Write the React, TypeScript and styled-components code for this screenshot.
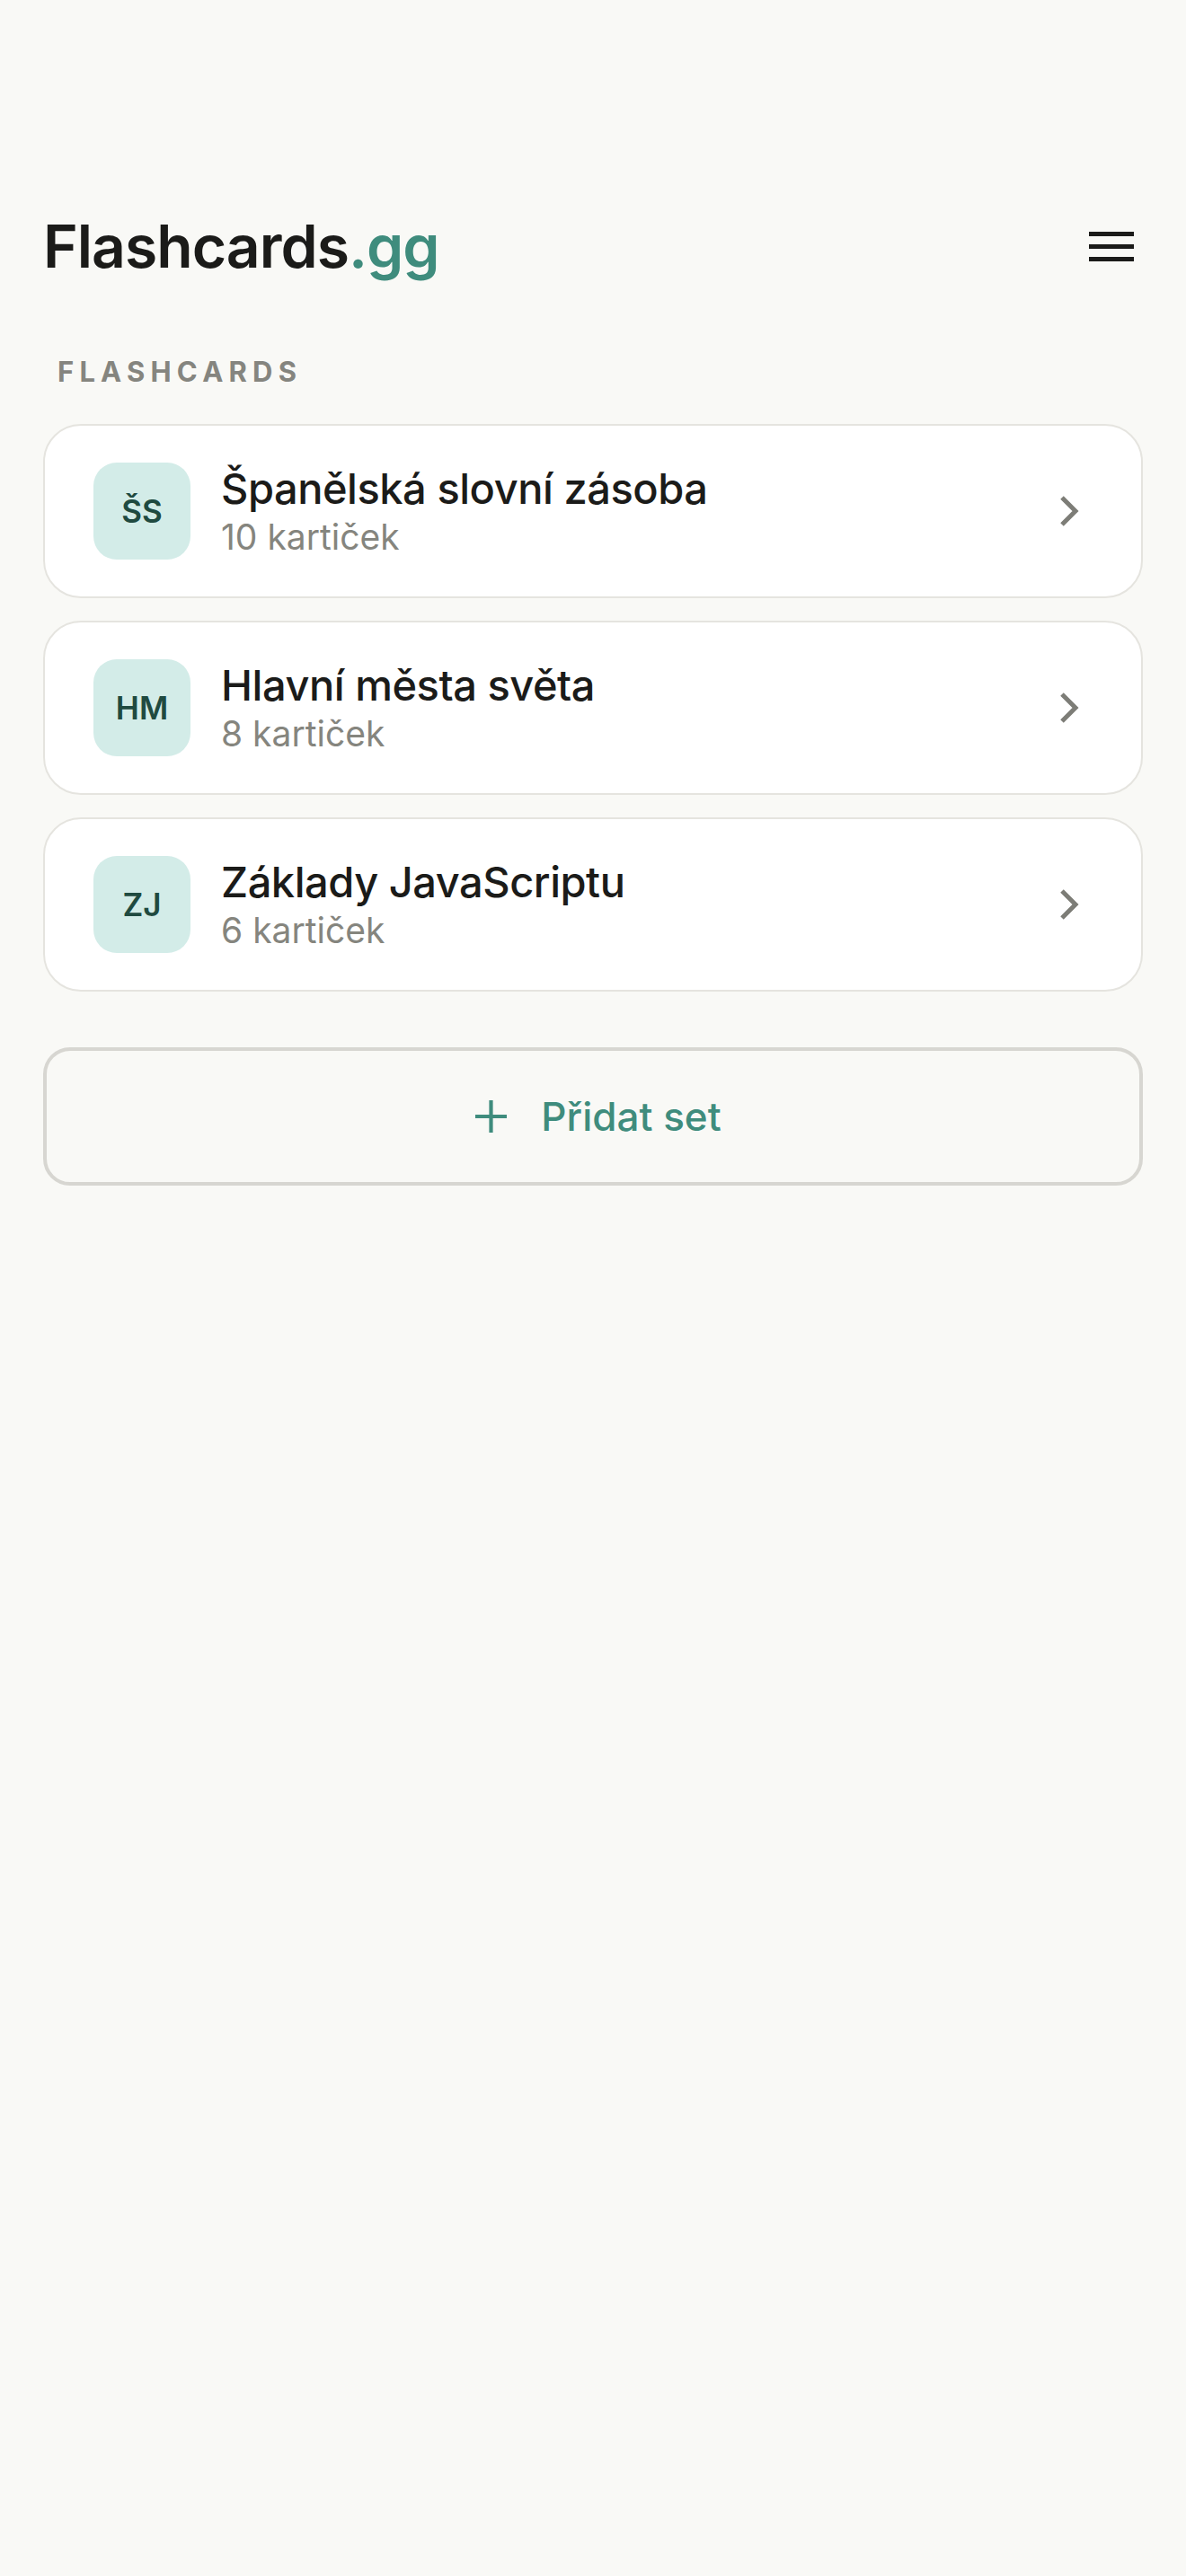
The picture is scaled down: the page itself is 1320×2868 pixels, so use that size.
import React from 'react'
import styled, { createGlobalStyle } from 'styled-components'

const GlobalStyle = createGlobalStyle`
  html, body {
    margin: 0;
    padding: 0;
    background: #f9f9f6;
  }
  body {
    font-family: Inter, "Noto Sans", "DejaVu Sans", sans-serif;
    color: #1b1b19;
    -webkit-font-smoothing: antialiased;
  }
  * { box-sizing: border-box; }
`

const Page = styled.main`
  min-height: 2868px;
  padding: 224px 48px 0;
  background: #f9f9f6;
`

const Header = styled.header`
  height: 100px;
  display: flex;
  align-items: center;
  justify-content: space-between;
`

const Logo = styled.h1`
  margin: 0;
  font-size: 66px;
  font-weight: 600;
  letter-spacing: -0.015em;
  line-height: 1;
  color: #1b1b19;

  span {
    color: #3f8c7d;
  }
`

const MenuButton = styled.button`
  border: 0;
  background: transparent;
  padding: 0;
  margin-right: 10px;
  width: 50px;
  height: 40px;
  display: flex;
  align-items: center;
  justify-content: center;
  cursor: pointer;
`

const SectionLabel = styled.h2`
  margin: 74px 0 0 16px;
  font-size: 31px;
  line-height: 1;
  font-weight: 700;
  letter-spacing: 0.2em;
  color: #85857f;
`

const SetList = styled.ul`
  list-style: none;
  margin: 43px 0 0;
  padding: 0;
  display: flex;
  flex-direction: column;
  gap: 25px;
`

const SetCard = styled.li`
  display: flex;
  align-items: center;
  padding: 41px 54px;
  background: #ffffff;
  border: 2px solid #e5e4df;
  border-radius: 42px;
  cursor: pointer;
`

const Avatar = styled.div`
  width: 108px;
  height: 108px;
  flex-shrink: 0;
  border-radius: 26px;
  background: #d3ece8;
  color: #1f4a40;
  display: flex;
  align-items: center;
  justify-content: center;
  font-size: 35px;
  font-weight: 600;
`

const SetText = styled.div`
  flex: 1;
  margin-left: 34px;
  display: flex;
  flex-direction: column;
  gap: 8px;
`

const SetTitle = styled.div`
  font-size: 47px;
  font-weight: 500;
  letter-spacing: -0.01em;
  line-height: 1.1;
  color: #1b1b19;
`

const SetCount = styled.div`
  font-size: 39px;
  font-weight: 400;
  line-height: 1.1;
  color: #85857e;
`

const Chevron = styled.svg`
  flex-shrink: 0;
  margin-right: 14px;
`

const AddButton = styled.button`
  margin-top: 62px;
  width: 100%;
  height: 154px;
  padding: 0 0 0 12px;
  border: 4px solid #d7d6d1;
  border-radius: 30px;
  background: transparent;
  display: flex;
  align-items: center;
  justify-content: center;
  gap: 38px;
  font-family: inherit;
  font-size: 44px;
  font-weight: 500;
  color: #3f8c7d;
  cursor: pointer;
`

interface FlashSet {
  initials: string
  title: string
  count: number
}

const sets: FlashSet[] = [
  { initials: 'ŠS', title: 'Španělská slovní zásoba', count: 10 },
  { initials: 'HM', title: 'Hlavní města světa', count: 8 },
  { initials: 'ZJ', title: 'Základy JavaScriptu', count: 6 },
]

const MenuIcon = () => (
  <svg width="50" height="33" viewBox="0 0 50 33">
    <rect x="0" y="0" width="50" height="5" fill="#1b1b19" />
    <rect x="0" y="14" width="50" height="5" fill="#1b1b19" />
    <rect x="0" y="28" width="50" height="5" fill="#1b1b19" />
  </svg>
)

const PlusIcon = () => (
  <svg width="35" height="36" viewBox="0 0 35 36">
    <path d="M17.5 0V36M0 18H35" stroke="#3f8c7d" strokeWidth="4.2" fill="none" />
  </svg>
)

export default function App() {
  return (
    <>
      <GlobalStyle />
      <Page>
        <Header>
          <Logo>
            Flashcards<span>.gg</span>
          </Logo>
          <MenuButton aria-label="Menu">
            <MenuIcon />
          </MenuButton>
        </Header>

        <SectionLabel>FLASHCARDS</SectionLabel>

        <SetList>
          {sets.map(set => (
            <SetCard key={set.initials}>
              <Avatar>{set.initials}</Avatar>
              <SetText>
                <SetTitle>{set.title}</SetTitle>
                <SetCount>{set.count} kartiček</SetCount>
              </SetText>
              <Chevron width="24" height="36" viewBox="0 0 24 36">
                <polyline points="4,3 19,18 4,33" fill="none" stroke="#7d7d77" strokeWidth="5" />
              </Chevron>
            </SetCard>
          ))}
        </SetList>

        <AddButton>
          <PlusIcon />
          Přidat set
        </AddButton>
      </Page>
    </>
  )
}
